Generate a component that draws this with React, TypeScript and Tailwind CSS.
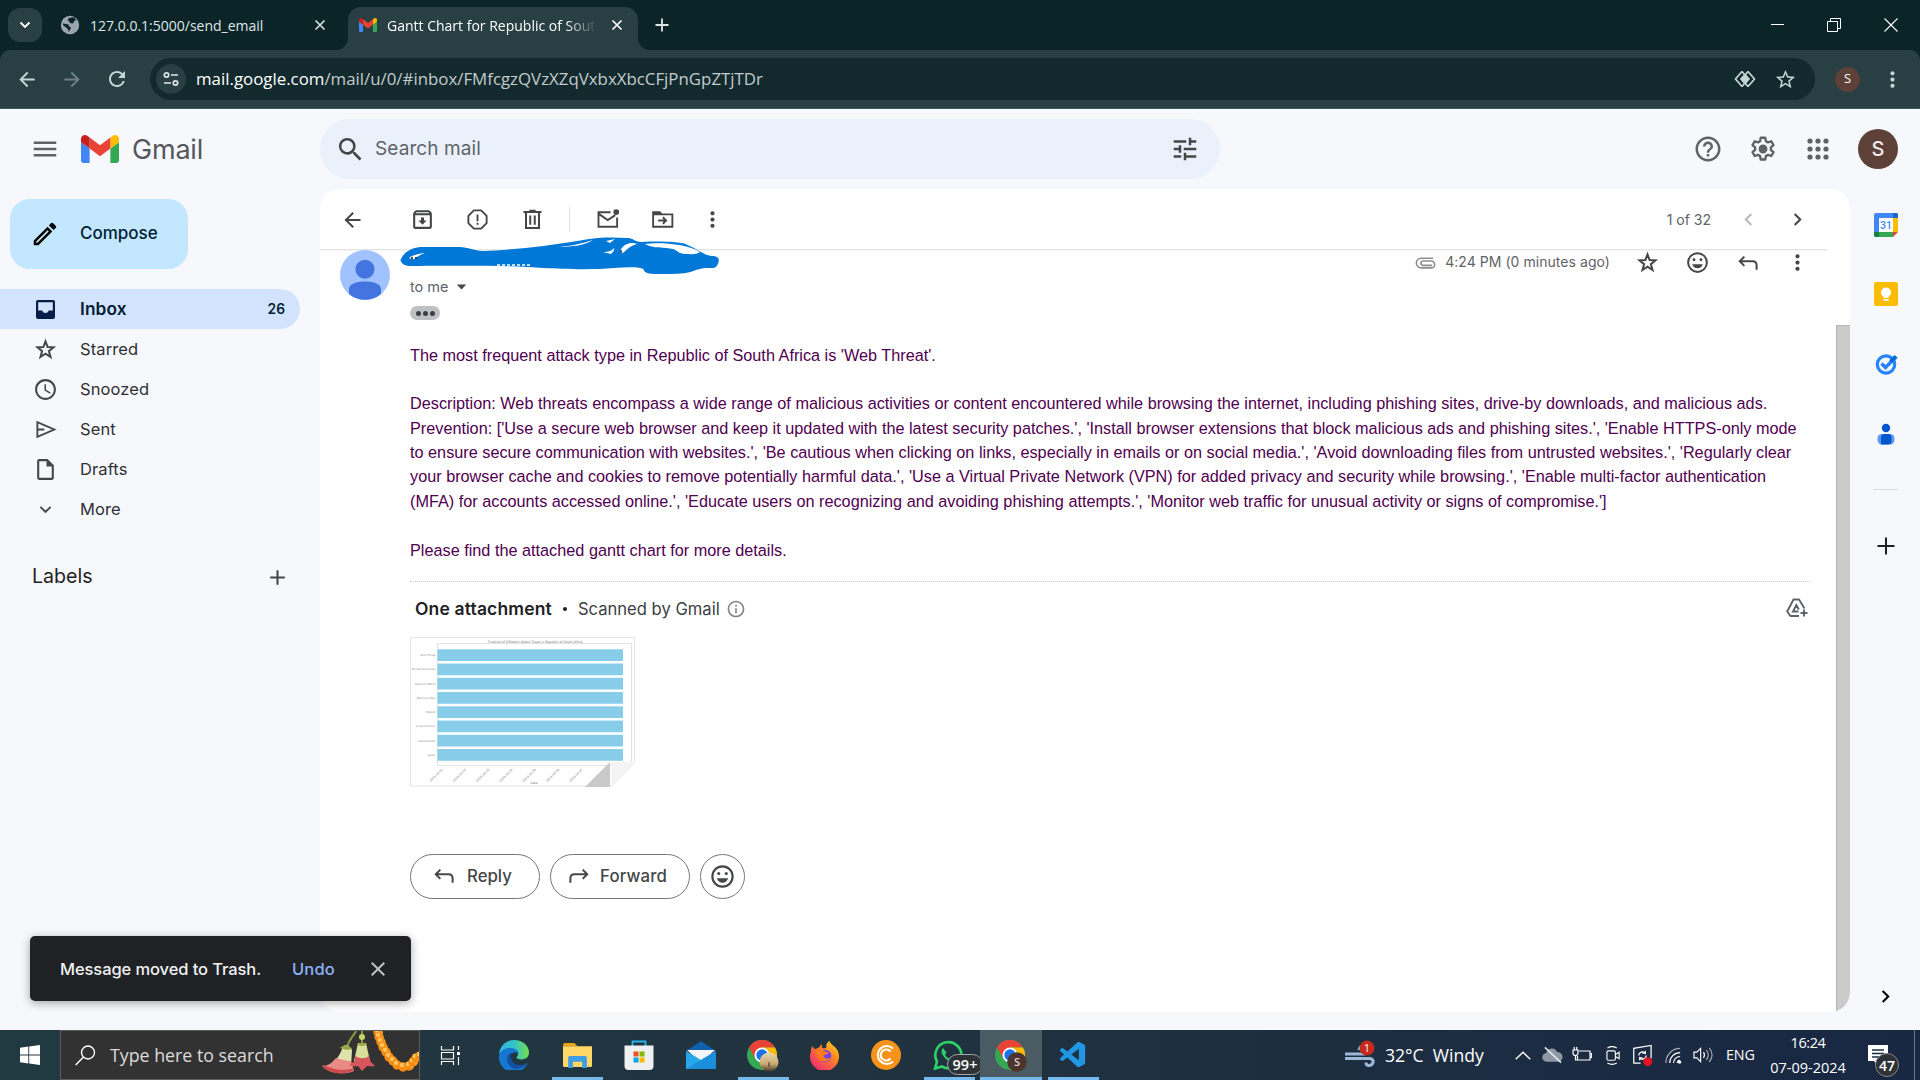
import React from "react";
import {
  MdAccessTime, MdAdd, MdApps, MdArrowBack, MdArrowDropDown, MdArrowForward, MdChevronLeft, MdChevronRight, MdClose,
  MdExpandMore, MdHelpOutline, MdInfoOutline, MdMenu, MdMoreVert, MdOutlineArchive,
  MdOutlineInsertDriveFile, MdOutlineSend, MdRefresh, MdSearch, MdStarBorder, MdTune, MdOutlineModeEdit,
} from "react-icons/md";
import { VscVscode } from "react-icons/vsc";

const SEGOE = "font-['Open_Sans',sans-serif]";

function GmailMark({ className }: { className: string }) {
  return (
    <svg viewBox="0 0 88 66" className={className} preserveAspectRatio="none">
      <path fill="#4285f4" d="M6 66h14V32L0 17v43c0 3.3 2.7 6 6 6" />
      <path fill="#34a853" d="M68 66h14c3.3 0 6-2.7 6-6V17L68 32" />
      <path fill="#fbbc04" d="M68 6v26l20-15V9c0-7.400-8.500-11.600-14.400-7.200" />
      <path fill="#ea4335" d="M20 32V6l24 18L68 6v26L44 50" />
      <path fill="#c5221f" d="M0 9v8l20 15V6l-5.600-4.200C8.500-2.600 0 1.600 0 9" />
    </svg>
  );
}

function Smile({ className }: { className: string }) {
  return (
    <svg viewBox="0 0 20 20" className={className} fill="none" stroke="currentColor">
      <circle cx="10" cy="10" r="7.500" strokeWidth="1.600" />
      <circle cx="7.200" cy="7.800" r="1.150" fill="currentColor" stroke="none" />
      <circle cx="12.800" cy="7.800" r="1.150" fill="currentColor" stroke="none" />
      <path d="M5.800 11.300h8.400c-.6 2-2.200 3.300-4.200 3.300s-3.600-1.300-4.200-3.300z" fill="currentColor" stroke="none" />
    </svg>
  );
}

function ReplyArrow({ className }: { className: string }) {
  return (
    <svg viewBox="0 0 20 20" className={className} fill="none" stroke="currentColor" strokeWidth="1.600">
      <path d="M6.700 4.500 3 8.200l3.700 3.700M3 8.200h10.200c2 0 3.300 1.300 3.300 3.300V15" />
    </svg>
  );
}

function Star({ className }: { className: string }) {
  return (
    <svg viewBox="0 0 20 20" className={className} fill="none" stroke="currentColor" strokeWidth="1.600">
      <path d="m10 3.500 1.700 4.500 4.700.3-3.700 3 1.300 4.700-4-2.700L6 16l1.300-4.700-3.700-3 4.700-.3z" />
    </svg>
  );
}

function Gear({ className }: { className: string }) {
  return (
    <svg viewBox="0 0 24 24" className={className} fill="none" stroke="currentColor" strokeWidth="1.900" strokeLinejoin="round">
      <path d="M10.200 3h3.600l.5 2.700 1.700 1 2.600-.9 1.800 3.100-2.100 1.800v2l2.100 1.800-1.800 3.100-2.600-.9-1.700 1-.5 2.700h-3.600l-.5-2.700-1.700-1-2.600.9-1.800-3.100 2.100-1.800v-2L3.600 8.900l1.800-3.100 2.600.9 1.700-1z" />
      <circle cx="12" cy="12" r="2.600" fill="currentColor" />
    </svg>
  );
}

function TabStrip() {
  return (
    <div className={`flex h-[50px] w-full items-center bg-[#0b2427] text-[#dfe6e7] ${SEGOE}`}>
      <div className="ml-2 flex h-[34px] w-[34px] items-center justify-center rounded-[12px] bg-[#283f43]">
        <svg viewBox="0 0 12 12" className="h-[12px] w-[12px]" fill="none" stroke="#fff" strokeWidth="1.900"><path d="m1.500 3.500 4.500 4.500 4.500-4.500" /></svg>
      </div>
      <div className="flex h-full w-[306px] items-center pl-[18px]">
        <svg viewBox="0 0 20 20" className="h-[20px] w-[20px]">
          <circle cx="10" cy="10" r="9.200" fill="#9aa5ae" />
          <path fill="#0b2427" d="M3 8.500 8.500 9.500l.5 2 2 1-1 2.500-1.500 2-.5-3-2-1.500L3 10zM9 3l5-.8 2.500 3-2 .3-1.500 3-3-.5-1-2-1.500-.5z" />
        </svg>
        <div className="mt-px ml-[10px] w-[224px] text-[14px] leading-5 whitespace-nowrap">127.0.0.1:5000/send_email</div>
        <svg viewBox="0 0 12 12" className="h-[12px] w-[12px]" stroke="#d5dddd" strokeWidth="1.700"><path d="m1.500 1.500 9 9m0-9-9 9" /></svg>
      </div>
      <div className="relative mt-[7px] flex h-[43px] w-[290px] items-center rounded-t-[13px] bg-[#283f43] pb-[7px] pl-[11px]">
        <svg viewBox="0 0 12 12" className="absolute bottom-0 -left-3 h-3 w-3"><path fill="#283f43" d="M12 0v12H0A12 12 0 0 0 12 0" /></svg>
        <svg viewBox="0 0 12 12" className="absolute -right-3 bottom-0 h-3 w-3"><path fill="#283f43" d="M0 0v12h12A12 12 0 0 1 0 0" /></svg>
        <GmailMark className="h-[14px] w-[18px]" />
        <div className="mt-px ml-[10px] w-[210px] overflow-hidden mask-r-from-85% mask-r-to-100% text-[14px] leading-5 whitespace-nowrap text-white">Gantt Chart for Republic of South Afr</div>
        <svg viewBox="0 0 12 12" className="ml-[14px] h-[12px] w-[12px]" stroke="#fff" strokeWidth="1.700"><path d="m1.500 1.500 9 9m0-9-9 9" /></svg>
      </div>
      <svg viewBox="0 0 14 14" className="ml-[17px] h-[14px] w-[14px]" stroke="#dfe6e7" strokeWidth="1.800"><path d="M7 0.500v13M.5 7h13" /></svg>
      <div className="ml-auto flex items-center pr-[22px]">
        <svg viewBox="0 0 14 14" className="mr-[42px] h-[14px] w-[14px]" stroke="#fff" strokeWidth="1"><path d="M0 6.500h13" /></svg>
        <svg viewBox="0 0 14 14" className="mr-[43px] h-[14px] w-[14px]" fill="none" stroke="#fff"><path d="M.5 3.500h10v10H.5zM3.500 3V.5h10v10H11" /></svg>
        <svg viewBox="0 0 14 14" className="h-[14px] w-[14px]" stroke="#fff" strokeWidth="1.100"><path d="m.5.500 13 13m0-13-13 13" /></svg>
      </div>
    </div>
  );
}

function AddressBar() {
  return (
    <div className="w-full bg-[#0b2427]">
      <div className={`flex h-[59px] items-center rounded-t-[10px] border-b border-[#45575b] bg-[#283f43] text-[#c4d5d7] ${SEGOE}`}>
        <div className="flex w-[150px] items-center pl-[15px]">
          <MdArrowBack className="h-[23px] w-[24px]" />
          <MdArrowForward className="ml-[21px] h-[23px] w-[24px] text-[#6f8185]" />
          <MdRefresh className="ml-[21px] h-[24px] w-[24px]" />
        </div>
        <div className="flex h-[42px] w-[1665px] items-center rounded-full bg-[#12292d] pl-[6px]">
          <div className="flex h-[30px] w-[30px] items-center justify-center rounded-full bg-[#283f43]">
            <svg viewBox="0 0 16 16" className="h-4 w-4" fill="none" stroke="#dfe6e7" strokeWidth="1.700"><circle cx="3.500" cy="4" r="2.200" /><path d="M8 4h7M1 12h7" /><circle cx="12.500" cy="12" r="2.200" /></svg>
          </div>
          <div className="ml-[10px] text-[16.850px] whitespace-nowrap text-[#c3cbcc]"><span className="text-white">mail.google.com</span>/mail/u/0/#inbox/FMfcgzQVzXZqVxbxXbcCFjPnGpZTjTDr</div>
          <svg viewBox="0 0 22 18" className="mr-[18px] ml-auto h-[18px] w-[22px]" fill="none" stroke="#c4d5d7" strokeWidth="1.700"><path d="M8 1.500 1.500 9 8 16.500M14 1.500 20.500 9 14 16.500M8 1.500l2.500 3M14 1.500l-2.500 3M8 16.500l2.500-3M14 16.500l-2.500-3" /><path d="m11 4.500 4 4.500-4 4.500L7 9z" fill="#c4d5d7" /></svg>
          <MdStarBorder className="mr-[18px] h-[23px] w-[23px]" />
        </div>
        <div className="ml-5 flex h-[25px] w-[25px] items-center justify-center rounded-full bg-[#5d4037] text-[13px] text-white">S</div>
        <MdMoreVert className="ml-[20px] h-[25px] w-[25px]" />
      </div>
    </div>
  );
}

function Header() {
  return (
    <div className="flex h-[80px] w-full shrink-0 items-center text-[#5f6368]">
      <div className="flex w-[320px] items-center pl-[30px]">
        <MdMenu className="h-[30px] w-[30px]" />
        <GmailMark className="ml-[21px] h-[28px] w-[38px]" />
        <div className="mt-px ml-[13px] text-[27px] leading-8 tracking-[-0.2px] text-[#54575c]">Gmail</div>
      </div>
      <div className="flex h-[60px] w-[900px] items-center rounded-full bg-[#eaf1fb] pl-[15px] text-[#444746]">
        <MdSearch className="h-[31px] w-[31px]" />
        <div className="mt-px ml-[9px] text-[19px] tracking-[0.1px] text-[#5f6368]">Search mail</div>
        <MdTune className="mr-[20px] ml-auto h-[30px] w-[30px]" />
      </div>
      <div className="ml-auto flex items-center">
        <MdHelpOutline className="mr-[25px] h-[30px] w-[30px]" />
        <Gear className="mr-[25px] h-[30px] w-[30px]" />
        <svg viewBox="0 0 30 30" className="mr-[25px] h-[30px] w-[30px]" fill="currentColor">
          {[7, 15, 23].map((y) => [7, 15, 23].map((x) => <circle key={`${x}-${y}`} cx={x} cy={y} r="2.600" />))}
        </svg>
        <div className="mr-[22px] flex h-10 w-10 items-center justify-center rounded-full bg-[#5d4037] text-[20px] font-medium text-[#efebe9]">S</div>
      </div>
    </div>
  );
}

function NavRow({ icon, label }: { icon: React.ReactNode; label: string }) {
  return (
    <div className="flex h-10 items-center pl-[33px] text-[#444746]">
      {icon}
      <span className="ml-[22px] text-[16.500px] tracking-[0.1px] text-[#303134]">{label}</span>
    </div>
  );
}

function Sidebar() {
  const ic = "h-[25px] w-[25px]";
  return (
    <div className="w-[320px] shrink-0">
      <div className="mt-[10px] ml-[10px] flex h-[70px] w-[178px] items-center rounded-[20px] bg-[#c2e7ff] pl-[20px] text-[#001d35]">
        <MdOutlineModeEdit className="h-[30px] w-[30px] text-black" />
        <span className="ml-[20px] text-[17px] font-medium">Compose</span>
      </div>
      <div className="mt-5 flex h-10 w-[300px] items-center rounded-r-full bg-[#d3e3fd] pl-[36px] text-[#001d35]">
        <svg viewBox="0 0 19 19" className="h-[19px] w-[19px]"><path fill="#041e49" fillRule="evenodd" d="M2 0h15a2 2 0 0 1 2 2v15a2 2 0 0 1-2 2H2a2 2 0 0 1-2-2V2a2 2 0 0 1 2-2m.2 2.200v8.300h4c.6 1.700 1.800 2.500 3.300 2.500s2.700-.8 3.300-2.500h4V2.200z" /></svg>
        <span className="ml-[25px] text-[17.300px] font-semibold tracking-[0.1px]">Inbox</span>
        <span className="mr-[15px] ml-auto text-[13.800px] font-semibold">26</span>
      </div>
      <NavRow label="Starred" icon={<Star className={ic} />} />
      <NavRow label="Snoozed" icon={<MdAccessTime className={ic} />} />
      <NavRow label="Sent" icon={<svg viewBox="0 0 20 20" className={ic} fill="none" stroke="currentColor" strokeWidth="1.500"><path d="M3.500 4.200v11.600L17 10zM4 10h5" /></svg>} />
      <NavRow label="Drafts" icon={<MdOutlineInsertDriveFile className={ic} />} />
      <NavRow label="More" icon={<MdExpandMore className="h-[23px] w-[25px]" />} />
      <div className="mt-[28px] flex h-10 items-center pl-[32px] text-[#1f1f1f]">
        <span className="text-[19.600px]">Labels</span>
        <MdAdd className="mr-[30px] ml-auto h-[25px] w-[25px] text-[#444746]" />
      </div>
    </div>
  );
}

function MessageToolbar() {
  const ic = "h-[25px] w-[25px] shrink-0";
  return (
    <div className="mr-[23px] flex h-[61px] shrink-0 items-center border-b border-[#e3e4e6] pt-px pl-[20px] text-[#444746] shadow-[0_1px_1px_rgba(0,0,0,0.04)]">
      <MdArrowBack className="h-[24px] w-[25px] shrink-0" />
      <MdOutlineArchive className={`${ic} ml-[45px]`} />
      <svg viewBox="0 0 20 20" className={`${ic} ml-[30px]`} fill="none" stroke="currentColor" strokeWidth="1.500"><path d="M7.100 2.700h5.800l4.400 4.400v5.800l-4.400 4.400H7.100l-4.400-4.400V7.100z" strokeLinejoin="round" /><path d="M10 6v5.300m0 1.300v1.500" /></svg>
      <svg viewBox="0 0 20 20" className={`${ic} ml-[30px]`} fill="none" stroke="currentColor" strokeWidth="1.600"><path d="M4.800 4.500v12.300h10.400V4.500M2.800 4h14.400M7.500 3h5M8.200 6.800v7.400m3.600-7.400v7.400" /></svg>
      <div className="ml-[24px] h-[25px] w-px bg-[#dcdee0]" />
      <svg viewBox="0 0 20 20" className={`${ic} ml-[25px]`} fill="none" stroke="currentColor" strokeWidth="1.500"><path d="M12.500 4.200H2.800v11.600h14.900V8.300M3 5.500l7.200 5 6-4" /><circle cx="17" cy="4" r="2.300" fill="currentColor" stroke="none" /></svg>
      <svg viewBox="0 0 20 20" className={`${ic} ml-[30px]`} fill="none" stroke="currentColor" strokeWidth="1.500"><path d="M2.500 15.800V4.200h5.300l1.600 1.700h8.500v9.900zM6.500 10.800h6M10.300 8.200l2.600 2.600-2.600 2.600" /><path d="M2.500 4h5.300l1.700 2.500h-7z" fill="currentColor" stroke="none" /></svg>
      <MdMoreVert className={`${ic} ml-[25px]`} />
      <span className="ml-auto text-[14px] whitespace-nowrap text-[#5f6368]">1 of 32</span>
      <MdChevronLeft className="ml-[25px] h-[25px] w-[25px] text-[#b8babc]" />
      <MdChevronRight className="mr-[17px] ml-[24px] h-[25px] w-[25px]" />
    </div>
  );
}

function Scribble() {
  return (
    <svg viewBox="0 0 320 40" className="absolute -top-[13px] left-[80px] h-[40px] w-[320px]">
      <path fill="#0078d7" d="M.5 24c1-6 8-13 20-14h40c10 1 16 4 22 4 30-1 65-5 95-10 12-2 20-3.500 33-3.500l18 .5c6 1 7 4 13 4 20-1 38 0 44 2 12 5 18 11 26 12 7 0 8 3 7 6-2 6-3 6-10 6-8 0-12 2-18 4-8 2-18 2-28 2-12 0-18 0-19-5-10-3-20-1-30-1-20 2-50 1-70 0-30-3-100-2-135-2-6-1-8-4-8-7" />
      <path fill="#fff" d="M9 21c4-3 8-4 16-5-4 2-8 3-9 5-2 2-5 1-7 0M159 10c12-1 25-4 34-7-8 5-20 7-34 7M203 15c5 0 9-1 11-4 1 2-1 4-3 6zM206 4l9-2-5 4zM220 14c4-8 12-9 17-7-5 1-9 4-14 9zM245 7c16-2 42 0 55 8-4 3-9 2-15 2-6 0-8-4-12-5-8-2-20 0-28-5z" />
      <path stroke="#111" strokeWidth="1.300" strokeDasharray="2 2" d="M11 21h6M221 13v4" fill="none" />
      <path stroke="#fff" strokeWidth="1.500" strokeDasharray="3 2" d="M97 28h34" fill="none" />
    </svg>
  );
}

const BODY = [
  "The most frequent attack type in Republic of South Africa is 'Web Threat'.",
  "",
  "Description: Web threats encompass a wide range of malicious activities or content encountered while browsing the internet, including phishing sites, drive-by downloads, and malicious ads.",
  "Prevention: ['Use a secure web browser and keep it updated with the latest security patches.', 'Install browser extensions that block malicious ads and phishing sites.', 'Enable HTTPS-only mode",
  "to ensure secure communication with websites.', 'Be cautious when clicking on links, especially in emails or on social media.', 'Avoid downloading files from untrusted websites.', 'Regularly clear",
  "your browser cache and cookies to remove potentially harmful data.', 'Use a Virtual Private Network (VPN) for added privacy and security while browsing.', 'Enable multi-factor authentication",
  "(MFA) for accounts accessed online.', 'Educate users on recognizing and avoiding phishing attempts.', 'Monitor web traffic for unusual activity or signs of compromise.']",
  "",
  "Please find the attached gantt chart for more details.",
];

const CHART_LABELS = ["Web Threat", "On-Demand Scan", "Network Attack", "Malicious Mail", "Exploit", "Local Infection", "Ransomware", "Spam"];
const TICKS = [0, 1, 2, 3, 4, 5, 6, 7];

function ChartThumb() {
  return (
    <svg viewBox="0 0 225 150" className="block h-[150px] w-[225px] font-['DejaVu_Sans',sans-serif]">
      <path d="M.5.500h224v125l-24 23.500H.5z" fill="#fff" stroke="#e6e6e6" />
      <text x="125" y="5.500" fontSize="3.400" textAnchor="middle" fill="#777" textLength="95" lengthAdjust="spacingAndGlyphs">Timeline of Different Attack Types in Republic of South Africa</text>
      <rect x="27.500" y="6.500" width="194" height="122" fill="none" stroke="#e2e2e2" />
      {CHART_LABELS.map((l, i) => (
        <g key={l}>
          <rect x="27.500" y={12.3 + i * 14.25} width="185.500" height="11.700" fill="#87cdea" />
          <text x="25.500" y={19.2 + i * 14.25} fontSize="2.700" textAnchor="end" fill="#888">{l}</text>
        </g>
      ))}
      {TICKS.map((t) => (
        <text key={t} transform={`translate(${33 + t * 23.3} 133) rotate(-45)`} fontSize="3" textAnchor="end" fill="#666">2023-04-0{t + 1}</text>
      ))}
      <text x="124" y="147" fontSize="3" textAnchor="middle" fill="#777">Date</text>
      <path d="M175 150 200 125v25z" fill="#cacaca" />
      <path d="M201 125h24l-24 25z" fill="#f4f4f4" />
      <path d="M201 150 225 126v24z" fill="#fff" />
      <path d="m201 149.500 23.500-24" stroke="#e6e6e6" />
    </svg>
  );
}

function Message() {
  const ic = "h-[25px] w-[25px]";
  const btn = "flex h-[45px] items-center rounded-full border border-[#747775] text-[#444746]";
  const dot = "h-[5px] w-[5px] rounded-full bg-[#3c4043]";
  return (
    <div className="relative flex-1">
      <Scribble />
      <div className="flex h-[50px]">
        <svg viewBox="0 0 50 50" className="ml-5 h-[50px] w-[50px]"><circle cx="25" cy="25" r="25" fill="#a0c3ff" /><circle cx="25" cy="19.200" r="9.500" fill="#4374e0" /><path fill="#4374e0" d="M9 44v-5c0-5 7-7.500 16-7.500S41 34 41 39v5a25 25 0 0 1-32 0" /></svg>
        <div className="ml-5 flex items-center self-end pb-[2px] text-[14.500px] leading-5 text-[#5f6368]">to me<MdArrowDropDown className="ml-[1px] h-[23px] w-[23px] text-[#444746]" /></div>
        <div className="mr-[40px] ml-auto flex h-[26px] items-center text-[#444746]">
          <svg viewBox="0 0 22 12" className="-mt-px mr-[9px] h-[12px] w-[21px]" fill="none" stroke="#8a8d90" strokeWidth="1.700"><path d="M18 8.500H8.500a2.300 2.300 0 0 1 0-4.600H17a3.600 3.600 0 0 1 0 7.200H6.500A5 5 0 0 1 6.500 1H19" /></svg>
          <span className="-mt-[3px] mr-[25px] text-[14px] tracking-[0.05px] whitespace-nowrap text-[#5f6368]">4:24 PM (0 minutes ago)</span>
          <Star className={`${ic} -mt-px mr-[25px]`} />
          <Smile className={`${ic} -mt-[2px] mr-[26px]`} />
          <ReplyArrow className={`${ic} mr-[24px]`} />
          <MdMoreVert className={`${ic} -mt-[2px]`} />
        </div>
      </div>
      <div className="mr-[40px] ml-[90px]">
        <div className="mt-[6px] flex h-[14px] w-[30px] items-center justify-center gap-[2px] rounded-full bg-[#bdc1c6]">
          <i className={dot} /><i className={dot} /><i className={dot} />
        </div>
        <div className="mt-[22.500px] font-['Liberation_Sans',sans-serif] text-[16.250px] leading-[24.375px] text-[#500050]">
          {BODY.map((line, i) => <div key={i} className="h-[24.375px] whitespace-nowrap">{line}</div>)}
        </div>
        <div className="mt-[19px] h-px border-t border-dotted border-[#c8c8c8]" />
        <div className="flex h-[55px] items-center pl-[5px] text-[#202124]">
          <span className="text-[17.500px] font-semibold tracking-[0.150px]">One attachment</span>
          <i className="mx-[11px] h-1 w-1 rounded-full bg-[#202124]" />
          <span className="text-[16.600px] text-[#3c4043]">Scanned by Gmail</span>
          <MdInfoOutline className="ml-[6px] h-5 w-5 text-[#80868b]" />
          <svg viewBox="0 0 22 20" className="mr-[2px] ml-auto -mt-[2px] h-[20px] w-[22px]" fill="none" stroke="#5f6368" strokeWidth="1.900"><path d="M13 18H4.500L1.200 13.500 7.500 1.500h5.500l5.500 9M12.500 13.500H7L10.300 7l2.500 4.500M18 11.500v7M14.500 15h7" /></svg>
        </div>
        <ChartThumb />
        <div className="mt-[67px] flex gap-[10px] text-[16.800px] font-medium">
          <div className={`${btn} w-[130px] pl-[21px]`}><ReplyArrow className={ic} /><span className="ml-[10px]">Reply</span></div>
          <div className={`${btn} w-[140px] pl-[15px]`}><ReplyArrow className={`${ic} -scale-x-100`} /><span className="ml-[9px] tracking-[0.150px]">Forward</span></div>
          <div className={`${btn} w-[45px] justify-center`}><Smile className="h-[27px] w-[27px] shrink-0" /></div>
        </div>
      </div>
      <div className="absolute top-[75px] right-0 bottom-0 w-[14px] border-t border-l border-[#b4b4b4] bg-[#cbcbcb]" />
    </div>
  );
}

function SidePanel() {
  return (
    <div className="flex h-[841px] w-[70px] flex-col items-center pt-[24px] pl-px">
      <svg viewBox="0 0 24 24" className="h-[24px] w-[24px] font-['Roboto',sans-serif]">
        <rect width="24" height="24" rx="2" fill="#4285f4" /><path d="M19 0h3a2 2 0 0 1 2 2v3h-5z" fill="#1967d2" /><path d="M19 5h5v14h-5z" fill="#fbbc04" /><path d="M5 19h14v5H5z" fill="#34a853" /><path d="M0 19h5v5H2a2 2 0 0 1-2-2z" fill="#188038" /><path d="M19 19h5v5h-5z" fill="#f6f8fc" /><path d="M19 19h5l-5 5z" fill="#ea4335" /><path d="M5 5h14v14H5z" fill="#fff" />
        <text x="12" y="16" fontSize="10.500" fontWeight="500" textAnchor="middle" fill="#4285f4">31</text>
      </svg>
      <svg viewBox="0 0 24 24" className="mt-[45px] h-[24px] w-[24px]"><rect width="24" height="24" rx="2" fill="#fbbc04" /><circle cx="12" cy="10.500" r="5" fill="#fff" /><path d="M9.500 13h5v2.700h-5zM9.500 17h5v1.800h-5z" fill="#fff" /></svg>
      <svg viewBox="0 0 24 24" className="mt-[46px] h-[24px] w-[24px]"><circle cx="12" cy="12.500" r="8.700" fill="none" stroke="#2684fc" strokeWidth="3.200" /><path d="m7.500 11.500 4 4L22.500 4.500" fill="none" stroke="#2684fc" strokeWidth="3.600" /><path d="m16.500 9.500 5-5" stroke="#0066da" strokeWidth="3.600" /></svg>
      <svg viewBox="0 0 24 24" className="mt-[46px] h-[24px] w-[24px]"><rect x="3.500" y="12" width="17" height="10.500" rx="4.500" fill="#5e97f6" /><path d="M7 22.500V15.500a3.500 3.500 0 0 1 3.500-3.500h3.500a3.500 3.500 0 0 1 3.500 3.500v3.500a3.500 3.500 0 0 1-3.500 3.500z" fill="#0057cc" /><circle cx="12" cy="6" r="4.200" fill="#0057cc" /></svg>
      <div className="mt-[43px] h-px w-[25px] bg-[#dadce0]" />
      <svg viewBox="0 0 18 18" className="mt-[47px] h-[18px] w-[18px]" stroke="#1f1f1f" strokeWidth="2"><path d="M9 .5v17M.5 9h17" /></svg>
      <MdChevronRight className="mt-auto mb-[21px] h-[25px] w-[25px] text-black" />
    </div>
  );
}

function Toast() {
  return (
    <div className="absolute top-[936px] left-[30px] flex h-[65px] w-[381px] items-center rounded-[5px] bg-[#202124] pl-[30px] text-[16.500px] font-medium whitespace-nowrap text-[#f1f3f4] shadow-[0_2px_10px_rgba(0,0,0,0.35)]">
      <span className="mt-px w-[232px] tracking-[-0.090px]">Message moved to Trash.</span>
      <span className="mt-px w-[74px] tracking-[0.150px] text-[#8ab4f8]">Undo</span>
      <MdClose className="h-[24px] w-[24px] text-[#bdc1c6]" />
    </div>
  );
}

function Chrome() {
  return (
    <>
      <circle cx="15" cy="15" r="15" fill="#34a853" />
      <path d="M2 7.500A15 15 0 0 1 28 7.500H15L8.500 18.700z" fill="#ea4335" />
      <path d="M28 7.500A15 15 0 0 1 15 30L21.500 18.700 21.500 11.200 15 7.500z" fill="#fbbc04" />
      <circle cx="15" cy="15" r="7.500" fill="#fff" /><circle cx="15" cy="15" r="5.700" fill="#1a73e8" />
    </>
  );
}

function TaskSlot({ children, open, active }: { children: React.ReactNode; open?: boolean; active?: boolean }) {
  return (
    <div className={`relative flex h-[50px] w-[62px] items-center justify-center ${active ? "bg-[#4a5b64]" : ""}`}>
      {children}
      {open && <div className={`absolute bottom-0 h-[3px] bg-[#76b9ed] ${active ? "w-[62px]" : "w-[51px]"}`} />}
    </div>
  );
}

const BEADS = [[2, 0], [3, 5], [5, 10], [7, 15], [10, 20], [13, 25], [17, 29], [21, 33], [27, 35], [33, 34], [37, 30], [40, 26], [44, 24]];

function Garland() {
  return (
    <svg viewBox="0 0 98 48" className="ml-auto h-[48px] w-[98px]">
      <path d="M35 0c-3 6-7 8-9 16M41 0v12" stroke="#8a9a3f" strokeWidth="2" fill="none" />
      <path d="M22 15c3-2 7 0 9 4l-1 17-18-4c5-5 8-10 10-17" fill="#dfe3ab" />
      <path d="M15 27c5 1 10 3 15 3l3 10c-9 4-24 3-32-5 6 0 10-3 14-8" fill="#ea8a84" />
      <path d="M1 34c8 2 14 5 20 5 5 0 9-2 12-1-2 6-27 7-32-4" fill="#cf4c4c" />
      <path d="M19 17c3-3 9-3 12 1l-5 1z" fill="#97a548" />
      <path d="M37 12h8l4 18H33z" fill="#d9df9b" /><path d="M34 25c5 3 10 3 14 0l1 5 5 5c-4 1-6 0-8 0l-5 5-4-5c-4 1-7 0-9-1l6-4z" fill="#d9555d" />
      <path d="M36 14c2-3 8-3 10 0l-5 1z" fill="#97a548" /><circle cx="41" cy="6" r="3" fill="#c9d26b" />
      {BEADS.map(([x, y], i) => (
        <g key={i}><circle cx={55 + x} cy={y + 1} r="4.700" fill="#f38a12" /><circle cx={54 + x} cy={y - 1} r="2.300" fill="#ffc35a" /><circle cx={58 + x} cy={y + 2} r="1.800" fill="#ffa726" /></g>
      ))}
    </svg>
  );
}

function Taskbar() {
  return (
    <div className={`flex h-[50px] w-full shrink-0 items-center bg-linear-to-r from-[#213940] via-[#20323f] to-[#192743] text-white ${SEGOE}`}>
      <div className="flex w-[60px] justify-center"><svg viewBox="0 0 20 20" className="h-5 w-5" fill="#fff"><path d="M0 2.700 8.300 1.500v8H0zM9.200 1.400 20 0v9.500H9.200zM0 10.400h8.300v8L0 17.300zM9.200 10.400H20V20L9.200 18.500z" /></svg></div>
      <div className="flex h-[50px] w-[360px] items-center border border-[#5c5c5c] bg-[#323232] pl-[14px] text-[#dcdcdc]">
        <svg viewBox="0 0 21 21" className="h-[21px] w-[21px]" fill="none" stroke="#fff" strokeWidth="1.400"><circle cx="13" cy="7.500" r="6.500" /><path d="M8.500 12 .7 20" /></svg>
        <span className="ml-[14px] text-[17.800px] whitespace-nowrap">Type here to search</span>
        <Garland />
      </div>
      <div className="flex w-[64px] justify-center"><svg viewBox="0 0 21 21" className="-ml-[3px] h-[21px] w-[21px]" fill="none" stroke="#fff" strokeWidth="1.200"><path d="M1.500 1v4h12V1M1.500 20v-3.500h12V20M1.500 7.500h12v6.500h-12zM18.500 1v4M18.500 12v8" /><path d="M17 7h3v3h-3z" fill="#fff" stroke="none" /></svg></div>
      <TaskSlot>
        <svg viewBox="0 0 30 30" className="-ml-[2px] h-[30px] w-[30px]">
          <defs><linearGradient id="edgeTop" x2="1"><stop stopColor="#2cb5ea" /><stop offset=".5" stopColor="#35c1c9" /><stop offset="1" stopColor="#6fe04c" /></linearGradient></defs>
          <path d="M0 14C1 5 8 0 15 0c9 0 15 6 15 12.500 0 5-4 7-7.500 7-3 0-5-1-5-2 0-1 1.500-1.500 1.500-3.500 0-3-3-5-8-5-5 0-9 2-11 5" fill="url(#edgeTop)" />
          <path d="M0 15C2 10 6 8 11 8c6 0 9 3 8.500 6C17 11 10 13 10 18.500c0 6 7 10 15 6.500l2.500-1.500c.7-.4 1 .2.600.7A15 15 0 0 1 0 15" fill="#1577cf" />
          <path d="M12 12.500C6 16 7 25 14.500 28.500c5 1 10-1 13.200-4.500.5-.6 0-1-.7-.6C19 27.500 9.500 23 12 12.500" fill="#1250a0" />
        </svg>
      </TaskSlot>
      <TaskSlot open><svg viewBox="0 0 28 24" className="h-[25px] w-[29px]"><path d="M0 2a2 2 0 0 1 2-2h9l3 3H0z" fill="#e8a317" /><path d="M0 3h28v19a1 1 0 0 1-1 1H1a1 1 0 0 1-1-1z" fill="#ffd767" /><path d="M5 24V14a1.500 1.500 0 0 1 1.500-1.500h15A1.500 1.500 0 0 1 23 14v10h-4.500v-6h-9v6z" fill="#3f9de6" /></svg></TaskSlot>
      <TaskSlot><svg viewBox="0 0 30 30" className="h-[30px] w-[30px]"><path d="M8.500 6V1.500h13V6" fill="none" stroke="#26b6ee" strokeWidth="1.800" /><path d="M.5 5.500h29V26a4 4 0 0 1-4 4h-21a4 4 0 0 1-4-4z" fill="#eef0f2" /><path d="M9.500 11.500h5v5h-5z" fill="#f25022" /><path d="M15.500 11.500h5v5h-5z" fill="#7fba00" /><path d="M9.500 17.500h5v5h-5z" fill="#00a4ef" /><path d="M15.500 17.500h5v5h-5z" fill="#ffb900" /></svg></TaskSlot>
      <TaskSlot><svg viewBox="0 0 30 28" className="h-[28px] w-[30px]"><path d="M0 10 15 0l15 10z" fill="#0f5fae" /><path d="M1 9h28L15 22z" fill="#f3f5f7" /><path d="M0 10l15 9 15-9v18H0z" fill="#28a8ea" /><path d="m0 28 15-9L30 10v18z" fill="#1c8fdc" /></svg></TaskSlot>
      <TaskSlot open><svg viewBox="0 0 32 32" className="mt-px h-[32px] w-[32px]"><Chrome /><defs><linearGradient id="sky" y2="1" x2="0"><stop stopColor="#e8d8ae" /><stop offset=".6" stopColor="#c9ab72" /><stop offset="1" stopColor="#3f3526" /></linearGradient></defs><circle cx="22" cy="22" r="9.500" fill="url(#sky)" /><path d="M21.300 27v-4l.7-1.500.7 1.500v4z" fill="#5c4b35" /></svg></TaskSlot>
      <TaskSlot>
        <svg viewBox="0 0 28 28" className="-ml-[2px] h-[29px] w-[29px]">
          <defs><linearGradient id="fox" x1="1" x2=".2" y2="1"><stop stopColor="#ffe226" /><stop offset=".4" stopColor="#ff8a1e" /><stop offset="1" stopColor="#f0257a" /></linearGradient></defs>
          <path d="M2 5c1 1 2 2 3 3l4-2 2-3 1 4c2 0 3 0 4-1-1-3 1-5 3-6 0 3 6 5 8 10a14 14 0 1 1-26 0c0-2 0-3 1-5" fill="url(#fox)" />
          <circle cx="14.500" cy="14.500" r="6" fill="#7542e5" /><path d="M5 9c3-2 7-1 9 1l4 1c-1 2-4 2-5 3 0 3 4 4 7 2-2 5-9 5-12 1z" fill="#ff7a1c" />
        </svg>
      </TaskSlot>
      <TaskSlot><svg viewBox="0 0 30 30" className="-ml-[2px] h-[30px] w-[30px]" fill="none" stroke="#fff"><circle cx="15" cy="15" r="15" fill="#f7931a" stroke="none" /><path d="M22 8.500a9 9 0 1 0 0 13" strokeWidth="2" /><path d="M19.500 11.500a5.500 5.500 0 1 0 0 7" strokeWidth="2.200" /></svg></TaskSlot>
      <TaskSlot open>
        <svg viewBox="0 0 30 30" className="-ml-[2px] h-[30px] w-[30px]"><path d="M2 28.500 4 21.500A13 13 0 1 1 9 26.500z" fill="none" stroke="#2bd366" strokeWidth="2.600" /><path d="M10 8c-3 3-1 7 3 11 4 3 7 4 9 1l-4-3-2 1.500c-2-1-3-2-4-4l1.500-2z" fill="#2bd366" /></svg>
        <div className="absolute right-[-3px] bottom-[5px] flex h-[21px] w-[36px] items-center justify-center rounded-full border border-[#a5a5a5] bg-[#2d3236] text-[14.500px] font-semibold">99+</div>
      </TaskSlot>
      <TaskSlot open active><svg viewBox="0 0 32 32" className="mt-px h-[32px] w-[32px]"><Chrome /><circle cx="22" cy="22" r="9.800" fill="#4e342e" /><text x="22" y="26" fontSize="11" fontWeight="600" textAnchor="middle" fill="#e0d4d0">S</text></svg></TaskSlot>
      <TaskSlot open><VscVscode className="h-[31px] w-[31px] text-[#2196e3]" /></TaskSlot>
      <div className="ml-auto flex h-full items-center">
        <svg viewBox="0 0 32 30" className="mr-[9px] h-[30px] w-[32px]"><path d="M1 14h19q5-1 4-5t-5-3q-3 0-4 4M1 18.500h25q4 1 3 4t-4 3q-3 0-3-3" fill="none" stroke="#9db9d8" strokeWidth="3" /><circle cx="23" cy="8" r="7.500" fill="#c42b1c" /><text x="23" y="12" fontSize="11" textAnchor="middle" fill="#fff">1</text></svg>
        <span className="mr-[31px] text-[17.600px] whitespace-pre">32°C  Windy</span>
        <svg viewBox="0 0 16 9" className="h-[9px] w-[16px]" fill="none" stroke="#fff" strokeWidth="1.400"><path d="m.7 8.300 7.300-7 7.300 7" /></svg>
        <svg viewBox="0 0 22 18" className="ml-[11px] h-[18px] w-[21px]"><path d="M5 16a4.500 4.500 0 0 1-.5-9A6 6 0 0 1 16 6a5 5 0 0 1 1 10z" fill="#8d97a5" /><path d="M3 1 20 17" stroke="#e6e9ed" strokeWidth="1.500" /></svg>
        <svg viewBox="0 0 20 16" className="ml-[9px] h-[16px] w-[20px]" fill="none" stroke="#fff" strokeWidth="1.200"><path d="M7 4h11v9H5.500V9M18 6.500h1.500v4H18M1 3h5v3a2.500 2.500 0 0 1-5 0zM2.300 0v3M4.700 0v3M3.500 8.500V13h2" /></svg>
        <svg viewBox="0 0 16 22" className="ml-[14px] h-[21px] w-[15px]" fill="none" stroke="#fff" strokeWidth="1.200"><rect x="1" y="6" width="9" height="10" rx="1.500" /><path d="m10 10 4-2.500v7L10 12M1.500 3q5-3 10 0M1.500 19q5 3 10 0" /></svg>
        <svg viewBox="0 0 21 24" className="ml-[12px] h-[23px] w-[20px]" fill="none" stroke="#fff" strokeWidth="1.300"><path d="M8 20H.8V4.500L19 1.500V15M6 12a4 4 0 0 1 7-2.500V7M13 9.500h-3M14 12a4 4 0 0 1-7 2.500V17M7 14.500h3" /><circle cx="15.500" cy="18.500" r="4.600" fill="#e81123" stroke="none" /></svg>
        <svg viewBox="0 0 18 18" className="ml-[12px] h-[17px] w-[17px]" fill="none" stroke="#fff" strokeWidth="1.200"><path d="M1 17A15 15 0 0 1 16 1.500" opacity=".6" /><path d="M5 17A11 11 0 0 1 16 6M9 17a7 7 0 0 1 7-7M13 17a3 3 0 0 1 3-3" /><circle cx="15.500" cy="16" r="1.200" fill="#fff" /></svg>
        <svg viewBox="0 0 22 18" className="ml-[11px] h-[18px] w-[21px]" fill="none" stroke="#fff" strokeWidth="1.200"><path d="M1 6v6h3l4 4V2L4 6zM11 6q2 3 0 6" /><path d="M14 4q4 5 0 10M17 1.500q6 7.500 0 15" opacity=".6" /></svg>
        <span className="ml-[12px] text-[14.300px]">ENG</span>
        <div className="mr-[21px] ml-[14px] w-[78px] text-center text-[14.500px] leading-[25px] whitespace-nowrap"><div className="tracking-[-0.400px]">16:24</div><div>07-09-2024</div></div>
        <div className="relative mr-[14px] h-full w-[32px]">
          <svg viewBox="0 0 20 20" className="mt-[15px] h-5 w-5"><path fill="#fff" d="M0 0h20v16h-8l-3 4-3-4H0z" /><path d="M4 5h12M4 8.500h12M4 12h8" stroke="#1b2a42" strokeWidth="1.300" /></svg>
          <div className="absolute top-[23px] left-[7px] flex h-6 w-6 items-center justify-center rounded-full border border-[#8a8a8a] bg-[#2e3136] text-[14px] font-semibold">47</div>
        </div>
        <div className="mr-[5px] h-full w-px bg-[#6a7484]" />
      </div>
    </div>
  );
}

export default function App() {
  return (
    <div className="relative flex h-[1080px] w-[1920px] flex-col overflow-hidden bg-[#f6f8fc] font-['Inter',sans-serif]">
      <TabStrip />
      <AddressBar />
      <Header />
      <div className="flex h-[841px]">
        <Sidebar />
        <div className="flex h-[823px] w-[1530px] flex-col overflow-hidden rounded-[20px] bg-white">
          <MessageToolbar />
          <Message />
        </div>
        <SidePanel />
      </div>
      <Taskbar />
      <Toast />
    </div>
  );
}
